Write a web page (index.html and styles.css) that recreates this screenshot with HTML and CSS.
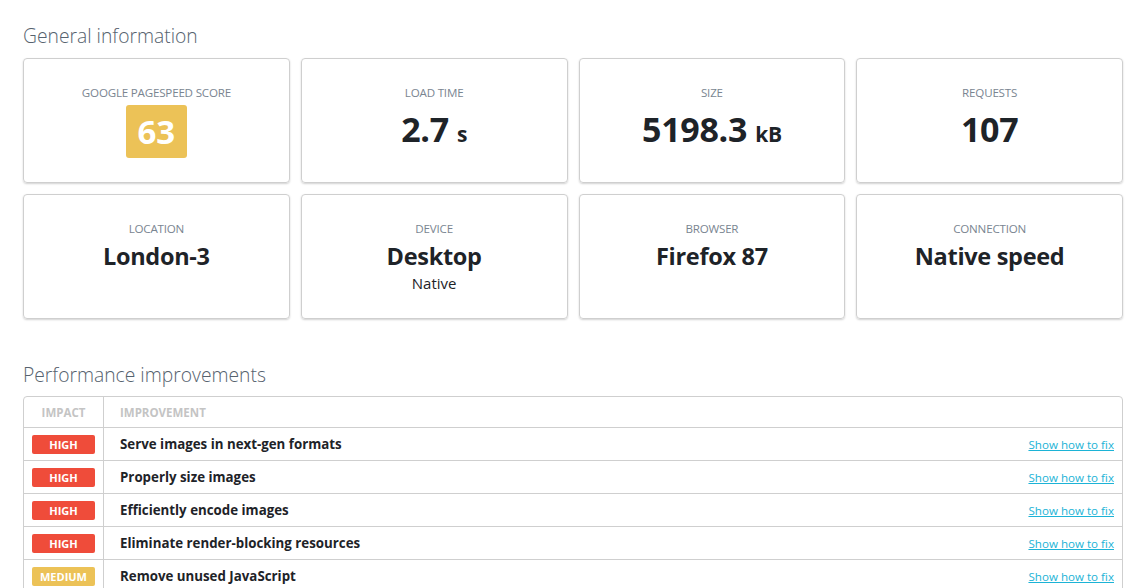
FILE: index.html
```html
<!DOCTYPE html>
<html>
<head>
<meta charset="utf-8">
<link rel="stylesheet" href="styles.css">
</head>
<body>
<div class="page">
  <h2 class="section-title">General information</h2>
  <div class="cards">
    <div class="card">
      <div class="label">Google PageSpeed score</div>
      <div class="score">63</div>
    </div>
    <div class="card">
      <div class="label">Load time</div>
      <div class="value">2.7<span class="unit">s</span></div>
    </div>
    <div class="card">
      <div class="label">Size</div>
      <div class="value">5198.3<span class="unit">kB</span></div>
    </div>
    <div class="card">
      <div class="label">Requests</div>
      <div class="value">107</div>
    </div>
    <div class="card">
      <div class="label">Location</div>
      <div class="value small">London-3</div>
    </div>
    <div class="card">
      <div class="label">Device</div>
      <div class="value small">Desktop</div>
      <div class="sub">Native</div>
    </div>
    <div class="card">
      <div class="label">Browser</div>
      <div class="value small">Firefox 87</div>
    </div>
    <div class="card">
      <div class="label">Connection</div>
      <div class="value small">Native speed</div>
    </div>
  </div>

  <h2 class="section-title perf">Performance improvements</h2>
  <div class="table">
    <div class="row head">
      <div class="c-impact">Impact</div>
      <div class="c-name">Improvement</div>
    </div>
    <div class="row">
      <div class="c-impact"><span class="badge high">High</span></div>
      <div class="c-name"><span class="title">Serve images in next-gen formats</span><a class="fix" href="#">Show how to fix</a></div>
    </div>
    <div class="row">
      <div class="c-impact"><span class="badge high">High</span></div>
      <div class="c-name"><span class="title">Properly size images</span><a class="fix" href="#">Show how to fix</a></div>
    </div>
    <div class="row">
      <div class="c-impact"><span class="badge high">High</span></div>
      <div class="c-name"><span class="title">Efficiently encode images</span><a class="fix" href="#">Show how to fix</a></div>
    </div>
    <div class="row">
      <div class="c-impact"><span class="badge high">High</span></div>
      <div class="c-name"><span class="title">Eliminate render-blocking resources</span><a class="fix" href="#">Show how to fix</a></div>
    </div>
    <div class="row">
      <div class="c-impact"><span class="badge medium">Medium</span></div>
      <div class="c-name"><span class="title">Remove unused JavaScript</span><a class="fix" href="#">Show how to fix</a></div>
    </div>
  </div>
</div>
</body>
</html>
```

FILE: styles.css
```css
html, body {
  margin: 0;
  padding: 0;
  background: #fff;
}
body {
  font-family: "Open Sans", "Noto Sans", sans-serif;
  color: #1f2328;
}
.page {
  width: 1100px;
  padding: 22px 0 0 23px;
}
.section-title {
  margin: 0 0 9px 0;
  font-size: 19.3px;
  font-weight: 300;
  color: #56626e;
  line-height: 27px;
}
.section-title.perf {
  margin-top: 42px;
  margin-bottom: 8px;
}
.cards {
  display: grid;
  grid-template-columns: repeat(4, 1fr);
  gap: 11px;
}
.card {
  height: 125px;
  box-sizing: border-box;
  border: 1px solid #cfcfcf;
  border-radius: 4px;
  box-shadow: 0 1px 2px rgba(0,0,0,0.18);
  padding-top: 26px;
  display: flex;
  flex-direction: column;
  align-items: center;
}
.label {
  font-size: 11.6px;
  text-transform: uppercase;
  color: #7a8591;
  line-height: 16px;
  letter-spacing: -0.2px;
}
.score {
  margin-top: 4px;
  width: 61px;
  height: 53px;
  background: #ecc257;
  border-radius: 3px;
  color: #fff;
  font-size: 33px;
  font-weight: 700;
  display: flex;
  align-items: center;
  justify-content: center;
}
.value {
  margin-top: 7px;
  font-size: 34px;
  font-weight: 700;
  line-height: 42px;
  color: #1e2328;
  letter-spacing: -0.3px;
}
.value .unit {
  font-size: 21px;
  margin-left: 8px;
}
.value.small {
  margin-top: 3px;
  font-size: 23.5px;
  line-height: 32px;
}
.sub {
  margin-top: 1px;
  font-size: 15px;
  line-height: 20px;
  color: #1e2328;
}
.table {
  border: 1px solid #cfcfcf;
  border-radius: 4px;
  width: 1098px;
}
.row {
  display: flex;
  border-top: 1px solid #cfcfcf;
  height: 32px;
  align-items: stretch;
}
.row.head {
  border-top: none;
  height: 30px;
}
.c-impact {
  width: 79px;
  flex: none;
  border-right: 1px solid #cfcfcf;
  display: flex;
  align-items: center;
  justify-content: center;
}
.c-name {
  flex: 1;
  display: flex;
  align-items: center;
  justify-content: space-between;
  padding: 0 8px 0 16px;
}
.row.head > div {
  font-size: 11.5px;
  font-weight: 700;
  text-transform: uppercase;
  color: #c4c4c4;
}
.badge {
  display: inline-block;
  width: 63px;
  height: 19px;
  line-height: 19px;
  text-align: center;
  border-radius: 2px;
  color: #fff;
  font-size: 11px;
  font-weight: 700;
  text-transform: uppercase;
}
.badge.high { background: #ef4c3a; }
.badge.medium { background: #ecc257; }
.title {
  font-size: 13.3px;
  font-weight: 700;
  color: #1e2328;
}
.fix {
  font-size: 11.6px;
  color: #1cb3d6;
  text-decoration: underline;
}
```
